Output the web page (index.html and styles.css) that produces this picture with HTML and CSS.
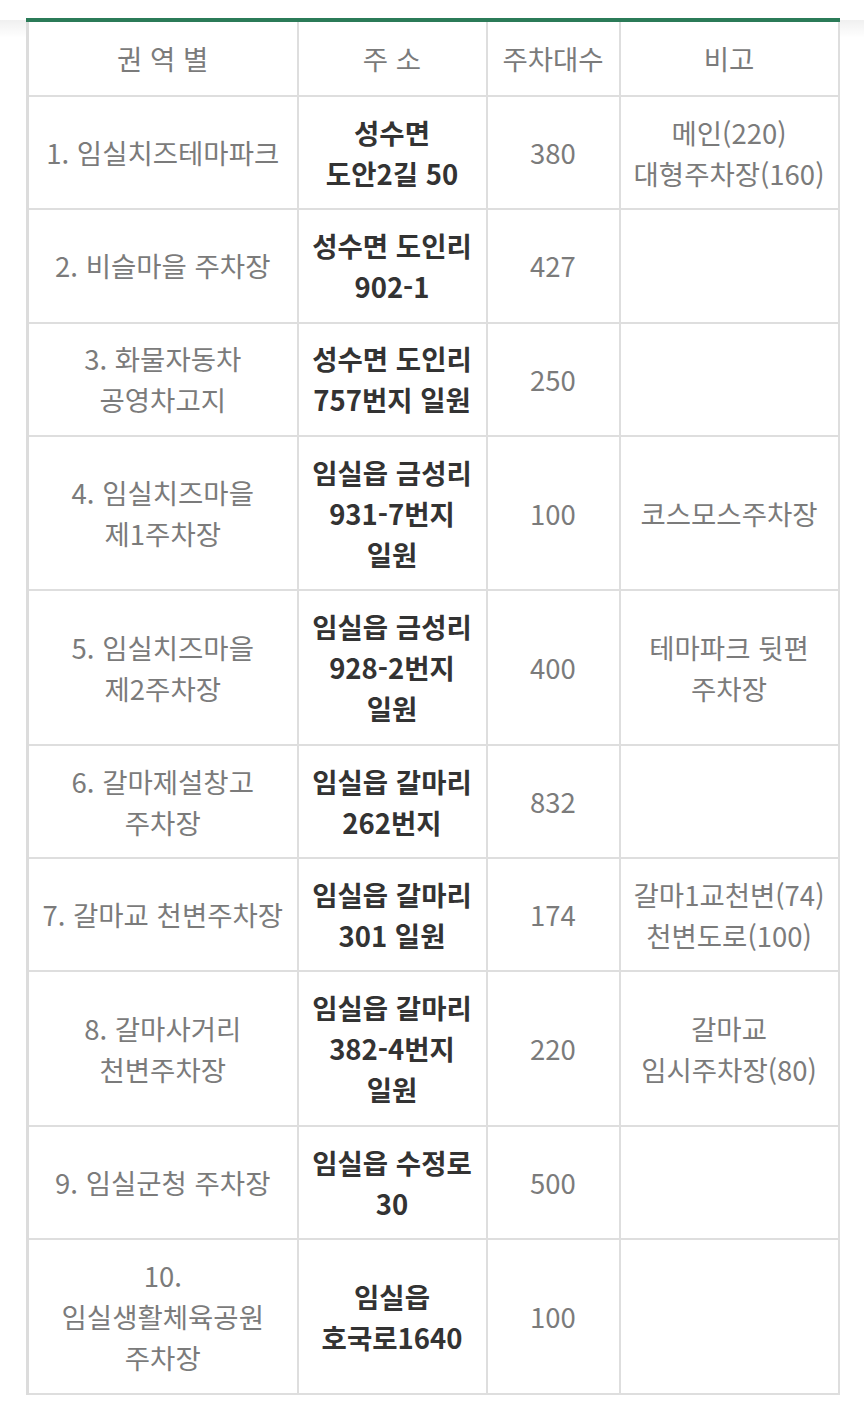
FILE: index.html
```html
<!DOCTYPE html>
<html lang="ko">
<head>
<meta charset="utf-8">
<link rel="stylesheet" href="styles.css">
</head>
<body>
<div class="page">
  <div class="topshade"></div>
  <table class="parking">
    <colgroup>
      <col class="c1"><col class="c2"><col class="c3"><col class="c4">
    </colgroup>
    <thead>
      <tr>
        <th>권 역 별</th>
        <th>주 소</th>
        <th>주차대수</th>
        <th>비고</th>
      </tr>
    </thead>
    <tbody>
      <tr class="r2"><td>1. 임실치즈테마파크</td><td class="addr">성수면<br>도안2길 50</td><td>380</td><td>메인(220)<br>대형주차장(160)</td></tr>
      <tr class="r2"><td>2. 비슬마을 주차장</td><td class="addr">성수면 도인리<br>902-1</td><td>427</td><td></td></tr>
      <tr class="r2"><td>3. 화물자동차<br>공영차고지</td><td class="addr">성수면 도인리<br>757번지 일원</td><td>250</td><td></td></tr>
      <tr class="r3"><td>4. 임실치즈마을<br>제1주차장</td><td class="addr">임실읍 금성리<br>931-7번지<br>일원</td><td>100</td><td>코스모스주차장</td></tr>
      <tr class="r3"><td>5. 임실치즈마을<br>제2주차장</td><td class="addr">임실읍 금성리<br>928-2번지<br>일원</td><td>400</td><td>테마파크 뒷편<br>주차장</td></tr>
      <tr class="r2"><td>6. 갈마제설창고<br>주차장</td><td class="addr">임실읍 갈마리<br>262번지</td><td>832</td><td></td></tr>
      <tr class="r2"><td>7. 갈마교 천변주차장</td><td class="addr">임실읍 갈마리<br>301 일원</td><td>174</td><td>갈마1교천변(74)<br>천변도로(100)</td></tr>
      <tr class="r3"><td>8. 갈마사거리<br>천변주차장</td><td class="addr">임실읍 갈마리<br>382-4번지<br>일원</td><td>220</td><td>갈마교<br>임시주차장(80)</td></tr>
      <tr class="r2"><td>9. 임실군청 주차장</td><td class="addr">임실읍 수정로<br>30</td><td>500</td><td></td></tr>
      <tr class="r3"><td>10.<br>임실생활체육공원<br>주차장</td><td class="addr">임실읍<br>호국로1640</td><td>100</td><td></td></tr>
    </tbody>
  </table>
</div>
</body>
</html>
```

FILE: styles.css
```css
html, body {
  margin: 0;
  padding: 0;
  background: #ffffff;
}
.page {
  position: relative;
  width: 864px;
  min-height: 1422px;
  padding-top: 18px;
  box-sizing: border-box;
  font-family: "Noto Sans CJK KR", "Noto Sans", sans-serif;
}
.topshade {
  position: absolute;
  left: 0;
  right: 0;
  top: 20px;
  height: 18px;
  background: linear-gradient(to bottom, rgba(0,0,0,0.06), rgba(0,0,0,0));
}
.parking {
  position: relative;
  margin-left: 26px;
  width: 811px;
  border-collapse: collapse;
  table-layout: fixed;
  border-top: 4px solid #2b7b58;
  background: #ffffff;
}
.c1 { width: 270px; }
.c2 { width: 189px; }
.c3 { width: 133px; }
.c4 { width: 219px; }
.parking th, .parking td {
  box-sizing: border-box;
  border: 2px solid #dedede;
  text-align: center;
  vertical-align: middle;
  font-size: 27.5px;
  line-height: 41px;
  color: #7b7b7b;
  padding: 14px 2px;
  font-weight: 400;
  white-space: nowrap;
}
.parking th {
  border-top: none;
  padding: 16px 2px;
}
.parking tr > :first-child {
  border-left: 3px solid #dcdcdc;
}
.parking td.addr {
  font-weight: 700;
  color: #333333;
}
.r2 td { height: 113.3px; }
.r3 td { height: 154.5px; }
```
